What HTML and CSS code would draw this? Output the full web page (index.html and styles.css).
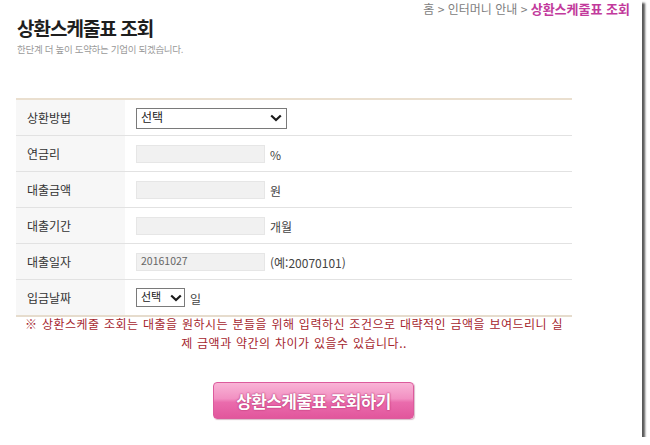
FILE: index.html
```html
<!DOCTYPE html>
<html lang="ko">
<head>
<meta charset="utf-8">
<link rel="stylesheet" href="styles.css">
</head>
<body>
<div class="frame">
  <div class="crumb">홈 &gt; 인터머니 안내 &gt; <b class="crumb-cur">상환스케줄표 조회</b></div>
  <h1 class="title">상환스케줄표 조회</h1>
  <p class="subtitle">한단계 더 높이 도약하는 기업이 되겠습니다.</p>

  <div class="table">
    <div class="row">
      <div class="label">상환방법</div>
      <div class="cell">
        <div class="select select-wide"><span>선택</span>
          <svg class="chev" width="12" height="8" viewBox="0 0 12 8"><path d="M1.2 1.5 L6 6 L10.8 1.5" fill="none" stroke="#1a1a1a" stroke-width="2.2"/></svg>
        </div>
      </div>
    </div>
    <div class="row">
      <div class="label">연금리</div>
      <div class="cell"><div class="input"></div><span class="unit">%</span></div>
    </div>
    <div class="row">
      <div class="label">대출금액</div>
      <div class="cell"><div class="input"></div><span class="unit">원</span></div>
    </div>
    <div class="row">
      <div class="label">대출기간</div>
      <div class="cell"><div class="input"></div><span class="unit">개월</span></div>
    </div>
    <div class="row">
      <div class="label">대출일자</div>
      <div class="cell"><div class="input"><span class="val">20161027</span></div><span class="unit">(예:20070101)</span></div>
    </div>
    <div class="row row-last">
      <div class="label">입금날짜</div>
      <div class="cell">
        <div class="select select-small"><span>선택</span>
          <svg class="chev" width="12" height="8" viewBox="0 0 12 8"><path d="M1.2 1.5 L6 6 L10.8 1.5" fill="none" stroke="#1a1a1a" stroke-width="2.2"/></svg>
        </div>
        <span class="unit unit-day">일</span>
      </div>
    </div>
  </div>

  <p class="note">※ 상환스케줄 조회는 대출을 원하시는 분들을 위해 입력하신 조건으로 대략적인 금액을 보여드리니 실<br>제 금액과 약간의 차이가 있을수 있습니다..</p>

  <div class="btn-wrap">
    <div class="btn">상환스케줄표 조회하기</div>
  </div>
</div>
</body>
</html>
```

FILE: styles.css
```css
html, body {
  margin: 0;
  padding: 0;
  background: #ffffff;
}
body {
  font-family: "Noto Sans CJK KR", "Noto Sans", sans-serif;
  color: #333;
}
.frame {
  width: 642px;
  height: 437px;
  box-sizing: border-box;
  padding-left: 16px;
  background: #fff;
  box-shadow: 3px 3px 2px rgba(60, 60, 60, 0.85);
  overflow: hidden;
}
.crumb {
  height: 15px;
  line-height: 15px;
  padding-top: 1px;
  font-size: 12px;
  color: #808080;
  text-align: right;
  padding-right: 12px;
  white-space: nowrap;
}
.crumb-cur {
  color: #c23a9c;
  font-weight: bold;
  font-size: 13px;
}
.title {
  margin: 0 0 0 1px;
  font-size: 19px;
  line-height: 24px;
  font-weight: bold;
  color: #1e1e1e;
  letter-spacing: -1px;
}
.subtitle {
  margin: 2px 0 0 1px;
  font-size: 9.5px;
  line-height: 14px;
  color: #9a9a9a;
  letter-spacing: -0.3px;
}
.table {
  margin-top: 42px;
  width: 556px;
  border-top: 2px solid #eadfcf;
  border-bottom: 2px solid #e6dccd;
}
.row {
  display: grid;
  grid-template-columns: 109px 1fr;
  height: 35px;
  border-bottom: 1px solid #e2e2e2;
}
.row-last {
  border-bottom: none;
}
.label {
  background: #f7f7f7;
  padding-left: 11px;
  font-size: 12px;
  line-height: 35px;
  color: #333;
}
.cell {
  display: flex;
  align-items: center;
  padding-left: 11px;
}
.select {
  box-sizing: border-box;
  display: flex;
  align-items: center;
  justify-content: space-between;
  border: 1px solid #7a7a7a;
  background: #fff;
  font-size: 12px;
  color: #222;
}
.select-wide {
  width: 151px;
  height: 21px;
  padding: 0 4px 0 4px;
  margin-top: 1px;
}
.select-small {
  width: 49px;
  height: 19px;
  padding: 0 2px 0 4px;
  font-size: 11px;
}
.select span {
  line-height: 16px;
  margin-top: -3px;
}
.chev {
  display: block;
}
.input {
  box-sizing: border-box;
  width: 129px;
  height: 18px;
  background: #f1f1f1;
  border: 1px solid #e6e6e6;
  display: flex;
  align-items: center;
  padding-left: 4px;
}
.val {
  font-size: 10.5px;
  color: #666;
  margin-top: -3px;
}
.unit {
  margin-left: 5px;
  font-size: 12px;
  color: #444;
  margin-top: 2px;
}
.unit-day {
  margin-left: 5px;
  margin-top: 1px;
}
.note {
  margin: -3px 0 0 0;
  width: 556px;
  text-align: center;
  font-size: 12px;
  line-height: 19px;
  color: #a5262e;
  letter-spacing: 0.5px;
  word-spacing: 0.5px;
}
.btn-wrap {
  display: flex;
  padding-left: 197px;
  margin-top: 30px;
}
.btn {
  box-sizing: border-box;
  width: 201px;
  height: 37px;
  border-radius: 4px;
  border: 1px solid #dc5b9d;
  background: linear-gradient(to bottom, #f9b4d6 0%, #f290c2 45%, #ea6cad 55%, #e2569c 100%);
  box-shadow: 1px 1px 1px rgba(150, 60, 100, 0.35);
  color: #fff;
  font-weight: bold;
  font-size: 17px;
  letter-spacing: -0.6px;
  line-height: 35px;
  text-align: center;
  text-shadow: 0 0 2px #b5336f, 0 0 1px #b5336f;
}
```
